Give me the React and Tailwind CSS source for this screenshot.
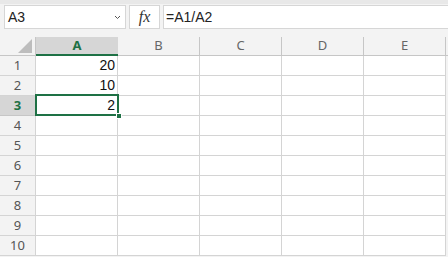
import React from 'react';

const cols = ['A', 'B', 'C', 'D', 'E'];
const rows = [1, 2, 3, 4, 5, 6, 7, 8, 9, 10];
const values = { 1: '20', 2: '10', 3: '2' };

function Chevron() {
  return (
    <svg width="7" height="5" viewBox="0 0 7 5" className="block">
      <path d="M1 1 L3.5 3.5 L6 1" fill="none" stroke="#555" strokeWidth="1" />
    </svg>
  );
}

export default function App() {
  return (
    <div className="w-[448px] h-[257px] overflow-hidden bg-[#f3f3f3] font-['Liberation_Sans',Arial,sans-serif] relative">
      {/* Formula bar */}
      <div className="h-[4px] bg-[#e8e8e8]" />
      <div className="flex items-start h-[33px] pt-px">
        <div className="ml-[4px] w-[122px] h-[24px] bg-white border border-[#d6d6d6] flex items-center pl-[3px] pr-[4px]">
          <span className="text-[14px] text-[#222] flex-1">A3</span>
          <Chevron />
        </div>
        <div className="ml-[3px] w-[31px] h-[24px] bg-white border border-[#d6d6d6] flex items-center justify-center">
          <span className="font-['Liberation_Serif',serif] italic text-[16px] text-[#333]">fx</span>
        </div>
        <div className="ml-[3px] flex-1 h-[24px] bg-white border border-[#d6d6d6] border-r-0 flex items-center pl-[2px]">
          <span className="text-[14px] text-[#222]">=A1/A2</span>
        </div>
      </div>

      {/* Grid */}
      <div className="grid grid-cols-[36px_repeat(5,82px)_1fr] font-['Noto_Sans',sans-serif]">
        {/* header row */}
        <div className="h-[19px] border-r border-b border-[#c6c6c6] bg-[#f3f3f3] flex items-end justify-end pr-[3px] pb-[2px]">
          <div className="w-0 h-0 border-l-[14px] border-l-transparent border-b-[14px] border-b-[#bdbdbd]" />
        </div>
        {cols.map((c) => (
          <div
            key={c}
            className={
              c === 'A'
                ? 'h-[19px] bg-[#d6d6d6] border-b-2 border-[#1e7145] flex items-center justify-center text-[13px] font-bold text-[#1e7145]'
                : 'h-[19px] bg-[#f3f3f3] border-r border-b border-[#c6c6c6] flex items-center justify-center text-[13px] text-[#666]'
            }
          >
            {c}
          </div>
        ))}
        <div className="h-[19px] border-b border-[#c6c6c6] bg-[#f3f3f3]" />

        {rows.map((r) => (
          <React.Fragment key={r}>
            <div
              className={
                r === 3
                  ? 'h-[20px] bg-[#d6d6d6] border-r border-b border-[#c6c6c6] flex items-center justify-center text-[13px] font-bold text-[#1e7145]'
                  : 'h-[20px] bg-[#f3f3f3] border-r border-b border-[#d4d4d4] flex items-center justify-center text-[13px] text-[#555]'
              }
            >
              {r}
            </div>
            {cols.map((c) => (
              <div
                key={c}
                className="h-[20px] bg-white border-r border-b border-[#d4d4d4] flex items-center justify-end pr-[2px] font-['Liberation_Sans',Arial,sans-serif] text-[14px] text-[#111]"
              >
                {c === 'A' ? values[r] : ''}
              </div>
            ))}
            <div className="h-[20px] bg-[#f3f3f3]" />
          </React.Fragment>
        ))}
      </div>

      {/* Selection on A3 */}
      <div className="absolute left-[35px] top-[94px] w-[84px] h-[22px] border-2 border-[#1e7145] pointer-events-none" />
      <div className="absolute left-[116px] top-[113px] w-[6px] h-[6px] bg-[#1e7145] border border-white" />
    </div>
  );
}
